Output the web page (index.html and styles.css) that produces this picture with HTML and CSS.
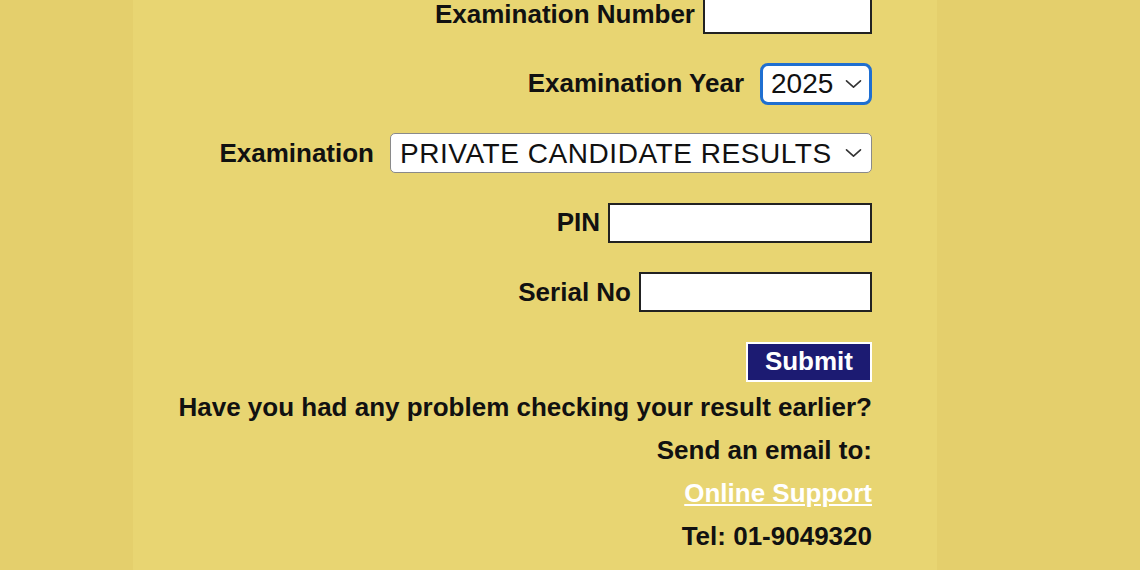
FILE: index.html
```html
<!DOCTYPE html>
<html lang="en">
<head>
<meta charset="utf-8">
<title>Check Result</title>
<link rel="stylesheet" href="styles.css">
</head>
<body>
<div class="page">
  <form class="form">
    <div class="row">
      <label class="lbl">Examination Number</label>
      <input class="field w-num" type="text">
    </div>
    <div class="row">
      <label class="lbl">Examination Year</label>
      <span class="sel sel-year">
        <select><option>2025</option></select>
        <svg class="chev" viewBox="0 0 17 10"><path d="M1.5 1.8 L8.5 8.2 L15.5 1.8" fill="none" stroke="#333" stroke-width="1.6" stroke-linecap="round" stroke-linejoin="round"/></svg>
      </span>
    </div>
    <div class="row">
      <label class="lbl">Examination</label>
      <span class="sel sel-exam">
        <select><option>PRIVATE CANDIDATE RESULTS</option></select>
        <svg class="chev" viewBox="0 0 17 10"><path d="M1.5 1.8 L8.5 8.2 L15.5 1.8" fill="none" stroke="#333" stroke-width="1.6" stroke-linecap="round" stroke-linejoin="round"/></svg>
      </span>
    </div>
    <div class="row">
      <label class="lbl">PIN</label>
      <input class="field w-pin" type="text">
    </div>
    <div class="row">
      <label class="lbl">Serial No</label>
      <input class="field w-serial" type="text">
    </div>
    <div class="row">
      <button class="submit" type="button">Submit</button>
    </div>
  </form>
  <div class="info">
    <p>Have you had any problem checking your result earlier?</p>
    <p>Send an email to:</p>
    <p><a class="link" href="#">Online Support</a></p>
    <p>Tel: 01-9049320</p>
    <p class="cut">(WHATSAPP) (0700 000 0000)</p>
  </div>
</div>
</body>
</html>
```
FILE: styles.css
```css
html, body {
  margin: 0;
  padding: 0;
  height: 100%;
  overflow: hidden;
  background: #e4cf6c;
}

.page {
  margin-left: 133px;
  width: 804px;
  min-height: 620px;
  box-sizing: border-box;
  padding-right: 65px;
  background: #e8d572;
  font-family: "Liberation Sans", Arial, sans-serif;
  font-weight: bold;
  font-size: 26px;
  color: #111;
}

.form {
  display: flex;
  flex-direction: column;
  align-items: flex-end;
  gap: 29.6px;
  margin: -6px 0 0 0;
  padding: 0;
}

.row {
  display: flex;
  align-items: center;
  justify-content: flex-end;
  gap: 8px;
  height: 40px;
}

.lbl {
  white-space: nowrap;
}

.field {
  height: 40px;
  box-sizing: border-box;
  border: 2px solid #222;
  background: #fff;
  padding: 0 6px;
  margin: 0;
  font-family: "Liberation Sans", Arial, sans-serif;
  font-size: 26px;
}

.w-num { width: 169px; }
.w-pin { width: 264px; }
.w-serial { width: 233px; }

.sel {
  position: relative;
  display: inline-flex;
  margin-left: 8px;
}

.sel select {
  appearance: none;
  -webkit-appearance: none;
  margin: 0;
  box-sizing: border-box;
  background: #fff;
  font-family: "Liberation Sans", Arial, sans-serif;
  font-weight: normal;
  font-size: 28px;
  color: #111;
  outline: none;
}

.sel-year select {
  width: 112px;
  height: 42px;
  border: 3px solid #1f6fd1;
  border-radius: 8px;
  padding: 0 0 0 8px;
}

.sel-exam select {
  width: 482px;
  height: 40px;
  border: 1.5px solid #8a8a8a;
  border-radius: 5px;
  padding: 0 0 0 9px;
  letter-spacing: 0.55px;
}

.chev {
  position: absolute;
  right: 10px;
  top: 50%;
  width: 17px;
  height: 10px;
  transform: translateY(-50%);
  pointer-events: none;
}

.submit {
  height: 40px;
  box-sizing: border-box;
  border: 2px solid #fff;
  background: #1c1b72;
  color: #fff;
  font-family: "Liberation Sans", Arial, sans-serif;
  font-weight: bold;
  font-size: 26px;
  padding: 0 17px;
  margin: 0;
}

.info {
  margin-top: 4px;
  text-align: right;
  line-height: 43px;
}

.info p {
  margin: 0;
  white-space: nowrap;
}

.info .cut {
  padding-top: 1px;
}

.link {
  color: #fff;
  text-decoration: underline;
}
```
